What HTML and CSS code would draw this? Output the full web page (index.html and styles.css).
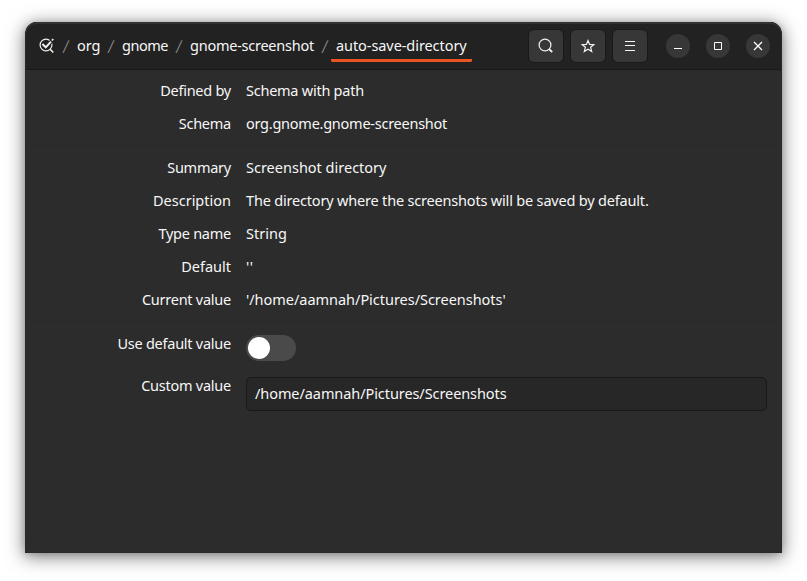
FILE: index.html
```html
<!DOCTYPE html>
<html lang="en">
<head>
<meta charset="utf-8">
<title>dconf Editor</title>
<link rel="stylesheet" href="styles.css">
</head>
<body>
<main class="window">
  <header class="headerbar">
    <nav class="path">
      <svg class="root-icon" width="16" height="16" viewBox="0 0 16 16" fill="none" stroke="#f2f2f2">
        <circle cx="7" cy="7" r="5.9" stroke-width="1.2"/>
        <path d="M3.6 6.4 6.8 9.5 14 1.6" stroke="#222" stroke-width="4"/>
        <path d="M3.4 6 6.8 9.3 12 3.6" stroke-width="2"/>
        <path d="M12.8 2.5 14.3 1M11.2 11.2 14.3 14.5" stroke-width="1.6"/>
      </svg>
      <span class="slash">/</span><span class="crumb org">org</span>
      <span class="slash">/</span><span class="crumb gnome">gnome</span>
      <span class="slash">/</span><span class="crumb shot">gnome-screenshot</span>
      <span class="slash">/</span><span class="crumb current">auto-save-directory</span>
    </nav>
    <div class="tools">
      <button class="tool" aria-label="Search"><svg width="16" height="16" viewBox="0 0 16 16" fill="none" stroke="#f2f2f2"><circle cx="7" cy="7" r="5.9" stroke-width="1.2"/><path d="M11 11 14.2 14.2" stroke-width="1.8"/></svg></button>
      <button class="tool" aria-label="Bookmark"><svg width="16" height="16" viewBox="0 0 16 16" fill="none" stroke="#f2f2f2" stroke-width="1.2"><path d="M8 2.6 9.6 6.4 13.8 6.7 10.6 9.3 11.7 13.5 8 11.2 4.3 13.5 5.4 9.3 2.2 6.7 6.4 6.4Z"/></svg></button>
      <button class="tool" aria-label="Menu"><svg width="16" height="16" viewBox="0 0 16 16" stroke="#f7f7f7"><path d="M3 3.5H13M3 7.5H13M3 12.5H13"/></svg></button>
    </div>
    <div class="controls">
      <button class="control" aria-label="Minimize"><svg width="16" height="16" viewBox="0 0 16 16" stroke="#fff"><path d="M4 10.5H12"/></svg></button>
      <button class="control" aria-label="Maximize"><svg width="16" height="16" viewBox="0 0 16 16" fill="none" stroke="#fff"><path d="M4.5 4.5H11.5V11.5H4.5Z"/></svg></button>
      <button class="control" aria-label="Close"><svg width="16" height="16" viewBox="0 0 16 16" stroke="#fff" stroke-width="1.3"><path d="M4 4 12 12M12 4 4 12"/></svg></button>
    </div>
  </header>
  <section class="group first">
    <div class="row"><span class="label">Defined by</span><span class="value tight">Schema with path</span></div>
    <div class="row"><span class="label">Schema</span><span class="value tight">org.gnome.gnome-screenshot</span></div>
  </section>
  <section class="group">
    <div class="row"><span class="label">Summary</span><span class="value">Screenshot directory</span></div>
    <div class="row"><span class="label wide">Description</span><span class="value sentence">The directory where the screenshots will be saved by default.</span></div>
    <div class="row"><span class="label">Type name</span><span class="value">String</span></div>
    <div class="row"><span class="label wide">Default</span><span class="value quotes">''</span></div>
    <div class="row"><span class="label">Current value</span><span class="value location">'/home/aamnah/Pictures/Screenshots'</span></div>
  </section>
  <section class="group last">
    <div class="row switch-row"><span class="label">Use default value</span><span class="switch"><span class="knob"></span></span></div>
    <div class="row"><span class="label">Custom value</span><div class="entry">/home/aamnah/Pictures/Screenshots</div></div>
  </section>
</main>
</body>
</html>
```
FILE: styles.css
```css
* { box-sizing: border-box; }
body {
  margin: 0;
  padding: 22px 25px 28px;
  height: 581px;
  overflow: hidden;
  background: #fff;
  color: #f7f7f7;
  font: 14.5px/20px "Noto Sans", sans-serif;
}
.window {
  height: 531px;
  border-radius: 12px 12px 0 0;
  background: #2c2c2c;
  border: 1px solid #2a2a2a;
  border-top: 0;
  box-shadow: 0 3px 18px 1px rgba(0,0,0,.5), 0 1px 6px rgba(0,0,0,.15);
}
.headerbar {
  display: flex;
  height: 48px;
  border-radius: 11px 11px 0 0;
  background: #222;
  border-bottom: 1px solid #191919;
  box-shadow: inset 0 2px #323232;
}
.path { display: flex; width: 502px; padding-left: 13px; white-space: nowrap; }
.root-icon { margin-top: 16px; width: 16px; flex: none; }
.slash { width: 22px; padding-top: 14px; text-align: center; color: #929292; font-size: 18px; font-weight: 300; transform: skewX(-5deg); flex: none; }
.crumb { padding-top: 13px; flex: none; }
.org { width: 23px; }
.gnome { width: 46px; letter-spacing: -.5px; }
.shot { width: 124px; letter-spacing: -.25px; }
.current {
  letter-spacing: -.07px;
  width: 141px;
  height: 40px;
  margin-left: -5px;
  padding-left: 5px;
  background: linear-gradient(#e95420, #e95420) bottom / 100% 3px no-repeat;
  clip-path: polygon(0 0, 100% 0, 100% 39px, 140px 100%, 1px 100%, 0 39px);
}
button { padding: 0; border: 0; color: inherit; display: flex; align-items: center; justify-content: center; }
.tools { display: flex; gap: 6px; padding-top: 7px; }
.tool { width: 36px; height: 34px; border: 1px solid #191919; border-radius: 6px; background: #373737; }
.controls { display: flex; gap: 16px; padding: 12px 0 0 18px; }
.control { width: 24px; height: 24px; border-radius: 50%; background: #373737; }
.group { padding: 6px 0 4px; border-bottom: 1px solid #292929; }
.first { padding-top: 5px; }
.last { border: 0; }
.row { display: flex; height: 33px; padding-top: 5px; gap: 15px; white-space: nowrap; }
.label { width: 205px; text-align: right; letter-spacing: -.25px; flex: none; }
.wide { letter-spacing: 0; }
.tight { letter-spacing: -.25px; }
.sentence { letter-spacing: -.185px; }
.quotes { letter-spacing: .5px; }
.location { letter-spacing: -.03px; }
.switch-row { height: 42px; }
.switch { width: 50px; height: 26px; margin-top: 2px; border-radius: 13px; background: #4a4a4a; padding: 2px; }
.knob { display: block; width: 22px; height: 22px; border-radius: 50%; background: #fff; }
.entry { width: 521px; height: 34px; margin-top: 2px; padding: 5px 8px; letter-spacing: -.08px; border: 1px solid #191919; border-radius: 5px; background: #272727; flex: none; }
```
